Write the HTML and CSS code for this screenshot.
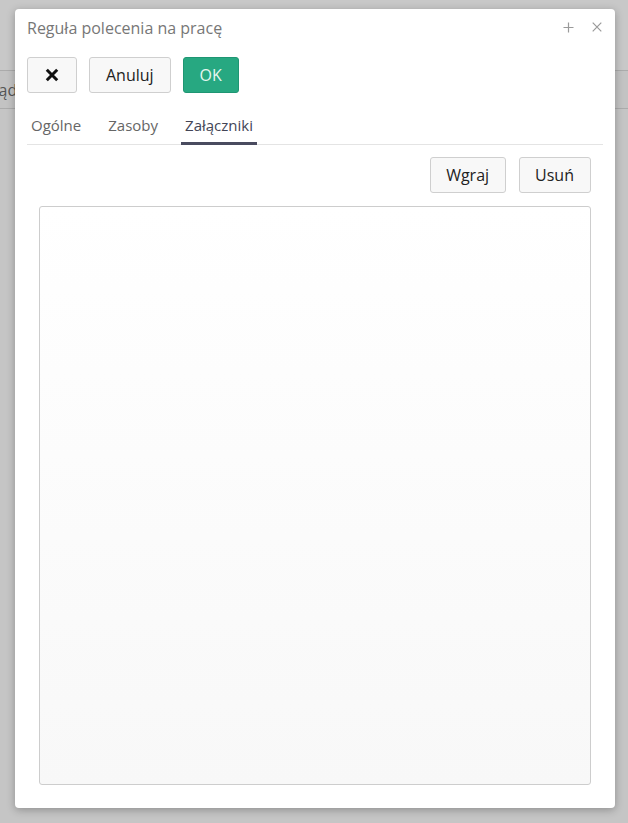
FILE: index.html
```html
<!DOCTYPE html>
<html lang="pl">
<head>
<meta charset="utf-8">
<title>Reguła polecenia na pracę</title>
<link rel="stylesheet" href="styles.css">
</head>
<body>
<div class="page">
  <div class="page-top"></div>
  <div class="page-band"><span class="band-text">ądz</span></div>
  <div class="page-rest"></div>
</div>
<div class="dialog">
  <div class="dialog-header">
    <div class="dialog-title">Reguła polecenia na pracę</div>
    <div class="header-icons">
      <svg class="hicon" width="11" height="11" viewBox="0 0 11 11"><path d="M5.5 0.5V10.5M0.5 5.5H10.5" stroke="#9a9a9a" stroke-width="1.2" fill="none"/></svg>
      <svg class="hicon" width="10" height="10" viewBox="0 0 10 10"><path d="M0.7 0.7L9.3 9.3M9.3 0.7L0.7 9.3" stroke="#9a9a9a" stroke-width="1.2" fill="none"/></svg>
    </div>
  </div>
  <div class="actions">
    <button class="btn btn-icon"><svg width="14" height="14" viewBox="0 0 14 14"><path d="M1.8 1.8L12.2 12.2M12.2 1.8L1.8 12.2" stroke="#111" stroke-width="3" fill="none"/></svg></button>
    <button class="btn btn-wide">Anuluj</button>
    <button class="btn btn-ok">OK</button>
  </div>
  <div class="tabs">
    <div class="tab">Ogólne</div>
    <div class="tab">Zasoby</div>
    <div class="tab active">Załączniki</div>
  </div>
  <div class="panel">
    <div class="toolbar">
      <button class="btn">Wgraj</button>
      <button class="btn">Usuń</button>
    </div>
    <div class="list"></div>
  </div>
</div>
</body>
</html>
```

FILE: styles.css
```css
* { box-sizing: border-box; }
html, body { margin: 0; padding: 0; }
body {
  width: 628px;
  height: 823px;
  overflow: hidden;
  font-family: "Open Sans", "Liberation Sans", sans-serif;
  background: #c5c5c5;
  position: relative;
}
.page { display: flex; flex-direction: column; height: 823px; }
.page-top { height: 71px; background: #c8c8c8; border-bottom: 1px solid #ababab; }
.page-band {
  height: 38px;
  background: #c3c3c3;
  border-bottom: 1px solid #ababab;
  display: flex;
  align-items: center;
  font-size: 16px;
  color: #555;
}
.band-text { margin-left: -1.5px; }
.page-rest { flex: 1; background: #c5c5c5; }
.dialog {
  position: absolute;
  left: 15px;
  top: 9px;
  width: 600px;
  height: 799px;
  background: #fff;
  border-radius: 4px;
  box-shadow: 0 2px 8px rgba(0, 0, 0, 0.28);
  padding: 8px 12px 12px 12px;
  display: flex;
  flex-direction: column;
}
.dialog-header {
  display: flex;
  align-items: center;
  justify-content: space-between;
  height: 22px;
}
.dialog-title {
  font-size: 16px;
  line-height: 22px;
  color: #777;
}
.header-icons {
  display: flex;
  align-items: center;
  gap: 18px;
  margin-right: 1px;
  margin-top: -2px;
}
.hicon { display: block; }
.actions {
  display: flex;
  gap: 12px;
  margin-top: 18px;
}
.btn {
  height: 36px;
  padding: 0 15.5px;
  border: 1px solid #cfcfcf;
  border-radius: 3px;
  background: #f8f8f8;
  font-family: "Open Sans", "Liberation Sans", sans-serif;
  font-size: 16px;
  color: #222;
  display: flex;
  align-items: center;
  justify-content: center;
  cursor: pointer;
}
.btn-wide { padding: 0 16px; }
.btn-icon { width: 50px; padding: 0; }
.btn-icon svg { display: block; }
.btn-ok {
  width: 56px;
  background: #27a881;
  border-color: #1f9673;
  color: #e6f6f0;
}
.tabs {
  display: flex;
  gap: 18px;
  margin-top: 19px;
  border-bottom: 1px solid #e4e4e4;
}
.tab {
  padding: 3px 4.5px 7px 4.5px;
  font-size: 15px;
  line-height: 20px;
  color: #666;
  margin-bottom: -1px;
  border-bottom: 3px solid transparent;
}
.tab:first-child { margin-left: -0.5px; }
.tab.active {
  color: #434556;
  border-bottom-color: #494b5f;
}
.panel {
  flex: 1;
  display: flex;
  flex-direction: column;
  padding: 12px 12.5px 11px 12px;
}
.toolbar {
  display: flex;
  justify-content: flex-end;
  gap: 13px;
}
.list {
  margin-top: 13px;
  flex: 1;
  border: 1px solid #cdcdcd;
  border-radius: 3px;
  background: linear-gradient(#ffffff, #f8f8f8);
}
```
